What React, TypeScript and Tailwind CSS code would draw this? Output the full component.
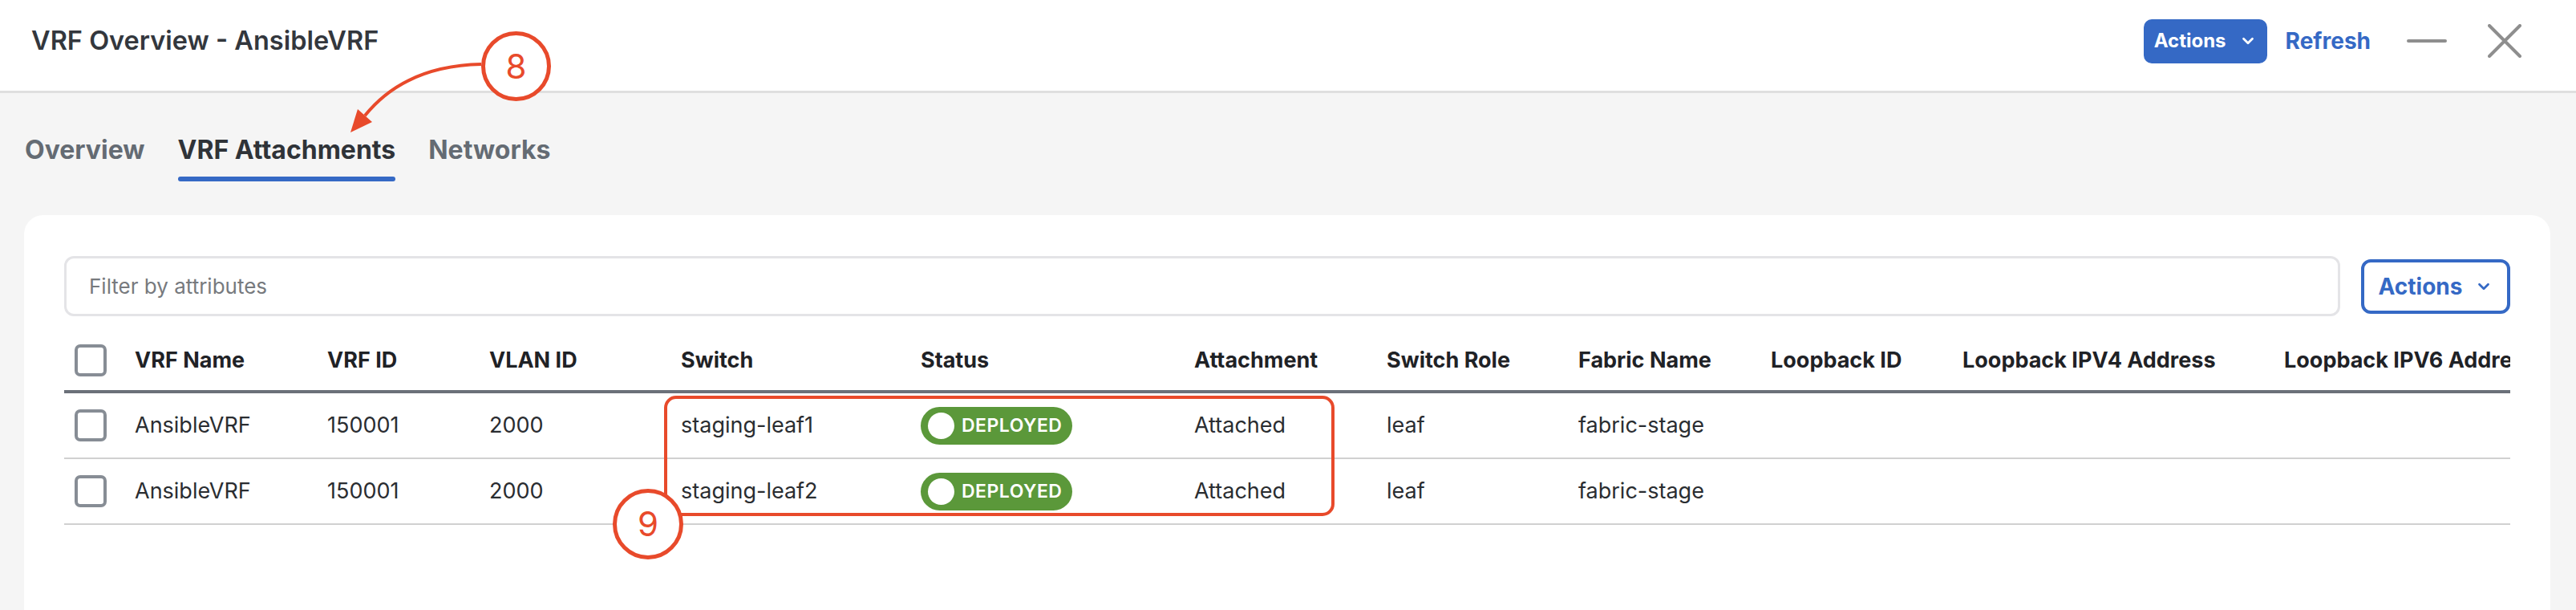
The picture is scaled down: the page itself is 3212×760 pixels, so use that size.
import { ChevronDown } from 'lucide-react';

const columns = [
  'VRF Name',
  'VRF ID',
  'VLAN ID',
  'Switch',
  'Status',
  'Attachment',
  'Switch Role',
  'Fabric Name',
  'Loopback ID',
  'Loopback IPV4 Address',
  'Loopback IPV6 Address',
];

const rows = [
  { name: 'AnsibleVRF', vrfId: '150001', vlanId: '2000', sw: 'staging-leaf1', attachment: 'Attached', role: 'leaf', fabric: 'fabric-stage' },
  { name: 'AnsibleVRF', vrfId: '150001', vlanId: '2000', sw: 'staging-leaf2', attachment: 'Attached', role: 'leaf', fabric: 'fabric-stage' },
];

const gridCols =
  'grid grid-cols-[76px_240px_202px_239px_299px_341px_240px_239px_240px_239px_401px_400px]';

const Checkbox = () => (
  <div className="ml-[13px] w-[40px] h-[40px] rounded-[7px] border-4 border-[#878d95] bg-white" />
);

const Deployed = () => (
  <div className="flex items-center w-[189px] h-[47px] rounded-full bg-[#5b983a]">
    <span className="ml-[9px] w-[33px] h-[33px] rounded-full bg-white" />
    <span className="ml-[9px] text-[23px] font-semibold tracking-[0.5px] text-white leading-none">DEPLOYED</span>
  </div>
);

export default function App() {
  const tabs = ['Overview', 'VRF Attachments', 'Networks'];

  return (
    <div className="relative w-[3212px] h-[760px] overflow-hidden bg-[#f5f5f5] flex flex-col font-['Inter',sans-serif]">
      {/* Header */}
      <header className="h-[116px] shrink-0 bg-white border-b-[3px] border-[#dfdfdf] flex items-center justify-between pl-[39px] pr-[68px] pb-[11px]">
        <h1 className="text-[32.5px] font-semibold text-[#33373d] leading-none">VRF Overview - AnsibleVRF</h1>
        <div className="flex items-center">
          <button className="w-[154px] h-[55px] rounded-[10px] bg-[#3569c5] text-white text-[24px] font-bold flex items-center justify-center gap-[16px]">
            Actions
            <ChevronDown size={22} strokeWidth={3} />
          </button>
          <span className="ml-[23px] text-[28px] font-bold text-[#3569c5]">Refresh</span>
          <div className="ml-[45px] w-[50px] h-[4px] rounded-full bg-[#8e8e8e]" />
          <svg className="ml-[51px]" width="42" height="42" viewBox="0 0 42 42">
            <path d="M2 2 L40 40 M40 2 L2 40" stroke="#8e8e8e" strokeWidth="4" strokeLinecap="round" />
          </svg>
        </div>
      </header>

      {/* Tabs */}
      <nav className="flex gap-[41px] pl-[31px] pt-[51px] shrink-0">
        {tabs.map((tab) => {
          const active = tab === 'VRF Attachments';
          return (
            <div key={tab} className="flex flex-col">
              <span
                className={`text-[32px] leading-[39px] font-bold ${active ? 'text-[#2f3338]' : 'text-[#646b73]'}`}
              >
                {tab}
              </span>
              <div className={`mt-[14px] h-[6px] rounded-full ${active ? 'bg-[#3569c5]' : 'bg-transparent'}`} />
            </div>
          );
        })}
      </nav>

      {/* Card */}
      <div className="mt-[42px] ml-[30px] w-[3150px] h-[600px] shrink-0 bg-white rounded-t-[24px] pt-[51px] px-[50px]">
        <div className="flex items-center gap-[26px]">
          <input
            className="flex-1 h-[75px] rounded-[12px] border-[3px] border-[#e4e4e7] pl-[28px] text-[26px] outline-none placeholder:text-[#777a7e]"
            placeholder="Filter by attributes"
          />
          <button className="w-[186px] h-[68px] rounded-[12px] border-4 border-[#3569c5] text-[#3569c5] text-[28px] font-bold flex items-center justify-center gap-[16px]">
            Actions
            <ChevronDown size={22} strokeWidth={3} />
          </button>
        </div>

        <div className="mt-[18px] overflow-hidden">
          <div className={`${gridCols} h-[78px] items-center border-b-4 border-[#6b7079]`}>
            <Checkbox />
            {columns.map((col) => (
              <div key={col} className="pl-[12px] text-[27px] font-bold text-[#1f2226] whitespace-nowrap">
                {col}
              </div>
            ))}
          </div>
          {rows.map((row, index) => (
            <div
              key={index}
              className={`${gridCols} h-[82px] items-center border-b-2 border-[#d0d0d0] text-[27px] text-[#2a2d31] whitespace-nowrap`}
            >
              <Checkbox />
              <div className="pl-[12px]">{row.name}</div>
              <div className="pl-[12px]">{row.vrfId}</div>
              <div className="pl-[12px]">{row.vlanId}</div>
              <div className="pl-[12px]">{row.sw}</div>
              <div className="pl-[12px]">
                <Deployed />
              </div>
              <div className="pl-[12px]">{row.attachment}</div>
              <div className="pl-[12px]">{row.role}</div>
              <div className="pl-[12px]">{row.fabric}</div>
              <div className="pl-[12px]"></div>
              <div className="pl-[12px]"></div>
              <div className="pl-[12px]"></div>
            </div>
          ))}
        </div>
      </div>

      {/* Annotation 8 */}
      <svg className="absolute left-0 top-0 pointer-events-none" width="700" height="200">
        <path d="M600 80 Q505 82 455 144" fill="none" stroke="#e84a2b" strokeWidth="4" />
        <polygon points="437,165 446,136 464,152" fill="#e84a2b" />
      </svg>
      <div className="absolute left-[600px] top-[39px] w-[87px] h-[87px] rounded-full border-[5px] border-[#e84a2b] bg-white flex items-center justify-center text-[42px] text-[#e84a2b] leading-none">
        8
      </div>

      {/* Annotation 9 */}
      <div className="absolute left-[828px] top-[493px] w-[836px] h-[150px] rounded-[15px] border-4 border-[#e84a2b]" />
      <div className="absolute left-[764px] top-[609px] w-[88px] h-[88px] rounded-full border-[5px] border-[#e84a2b] bg-white flex items-center justify-center text-[42px] text-[#e84a2b] leading-none">
        9
      </div>
    </div>
  );
}
